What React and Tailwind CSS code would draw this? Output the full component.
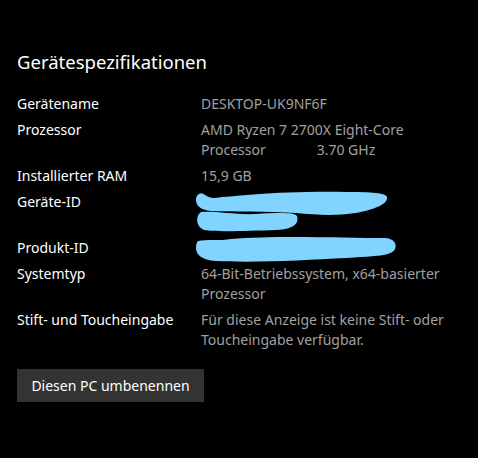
// Gerätespezifikationen – Windows 10 Einstellungen (dunkel)

const Redaction = ({ paths, className = "" }) => (
  <svg
    className={`absolute -left-[5px] pointer-events-none ${className}`}
    width="210"
    height="44"
    viewBox="0 0 210 44"
    fill="#80d4ff"
    style={{ overflow: "visible" }}
  >
    {paths.map((d, i) => (
      <path key={i} d={d} />
    ))}
  </svg>
);

const geraeteIdBlurbs = [
  "M3,2 C7,-1 11,7 19,6 C40,4 80,-1 150,0 C176,0 190,1 191,5 C192,12 180,17 160,21 C140,24 120,23 100,21 C70,19 40,20 15,19 C4,18 0,13 0,8 C0,5 1,3 3,2 Z",
  "M5,20 C20,19 40,23 60,22 C80,21 98,20 101,24 C103,31 99,37 80,38 C50,39 20,40 8,38 C0,35 -1,24 5,20 Z",
];

const produktIdBlurbs = [
  "M2,3 C10,1 25,3 35,1 C80,-3 150,0 190,0 C198,1 201,6 199,11 C196,18 180,18 150,20 C110,22 60,25 20,23 C5,22 0,16 0,10 C0,6 1,4 2,3 Z",
];

const specs = [
  { label: "Gerätename", lines: ["DESKTOP-UK9NF6F"] },
  {
    label: "Prozessor",
    lines: ["AMD Ryzen 7 2700X Eight-Core", "Processor\u00a0\u00a0\u00a0\u00a0\u00a0\u00a0\u00a0\u00a0\u00a0\u00a0\u00a0\u00a0\u00a0\u00a03.70 GHz"],
  },
  { label: "Installierter RAM", lines: ["15,9 GB"] },
  { label: "Geräte-ID", lines: ["", ""], redact: geraeteIdBlurbs },
  { label: "Produkt-ID", lines: [""], redact: produktIdBlurbs },
  { label: "Systemtyp", lines: ["64-Bit-Betriebssystem, x64-basierter", "Prozessor"] },
  {
    label: "Stift- und Toucheingabe",
    lines: ["Für diese Anzeige ist keine Stift- oder", "Toucheingabe verfügbar."],
  },
];

export default function App() {
  return (
    <div
      className="w-[478px] h-[458px] bg-black text-white pl-[17px] pt-[48px] overflow-hidden"
      style={{ fontFamily: '"Noto Sans", "Open Sans", sans-serif' }}
    >
      <h2 className="text-[18.5px] leading-[28px] font-normal">Gerätespezifikationen</h2>

      <div className="mt-[18px] flex flex-col gap-[6px] text-[14px] leading-[20px]">
        {specs.map((row) => (
          <div key={row.label} className="flex">
            <div className="w-[184px] shrink-0">{row.label}</div>
            <div className="relative text-[#a0a0a0] whitespace-nowrap">
              {row.lines.map((line, i) => (
                <div key={i} className="h-[20px]">
                  {line}
                </div>
              ))}
              {row.redact && <Redaction paths={row.redact} className="top-0" />}
            </div>
          </div>
        ))}
      </div>

      <button className="mt-[19px] h-[33px] w-[187px] bg-[#333333] text-white text-[14px] leading-[20px] text-center">
        Diesen PC umbenennen
      </button>
    </div>
  );
}
